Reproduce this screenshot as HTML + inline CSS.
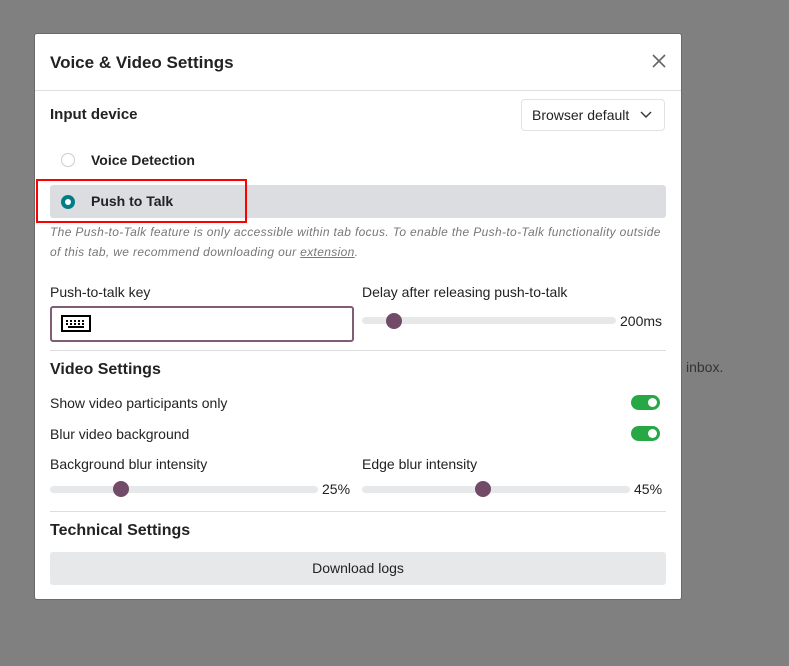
<!DOCTYPE html>
<html><head><style>
body{margin:0;width:789px;height:666px;background:#808080;font-family:"Liberation Sans",sans-serif;position:relative;overflow:hidden;color:#212529}
.a{position:absolute;white-space:nowrap}
.m{position:absolute;left:34px;top:33px;width:648px;height:567px;background:#fff;border-radius:3px;border:1px solid #6a6a6a;box-sizing:border-box}
.b{font-weight:bold;color:#222}
.t{font-size:14px;color:#222}
.track{position:absolute;height:7px;background:#e7e8ea;border-radius:4px}
.knob{position:absolute;width:16px;height:16px;border-radius:50%;background:#714b67}
.tog{position:absolute;width:29px;height:15px;border-radius:8px;background:#28a745}
.tog:after{content:"";position:absolute;right:3px;top:3px;width:9px;height:9px;border-radius:50%;background:#fff}
</style></head><body>
<div class="a" style="left:686px;top:359px;font-size:14px;color:#333">inbox.</div>
<div class="m"></div>
<div class="a b" style="left:50px;top:53px;font-size:17px">Voice &amp; Video Settings</div>
<svg class="a" style="left:651px;top:53px" width="16" height="16"><path d="M2 2L14 14M14 2L2 14" stroke="#666" stroke-width="1.6"/></svg>
<div class="a" style="left:35px;top:90px;width:646px;height:1px;background:#ddd"></div>
<div class="a b" style="left:50px;top:106px;font-size:15px">Input device</div>
<div class="a" style="left:521px;top:99px;width:144px;height:32px;border:1px solid #e2e2e2;border-radius:4px;box-sizing:border-box"></div>
<div class="a t" style="left:532px;top:107px">Browser default</div>
<svg class="a" style="left:640px;top:111px" width="12" height="8"><path d="M1 1L6 6L11 1" stroke="#333" stroke-width="1.4" fill="none"/></svg>
<div class="a" style="left:61px;top:153px;width:12px;height:12px;border-radius:50%;border:1px solid #ccc"></div>
<div class="a b" style="left:91px;top:152px;font-size:14px">Voice Detection</div>
<div class="a" style="left:50px;top:185px;width:616px;height:33px;background:#dcdde0;border-radius:3px"></div>
<div class="a" style="left:61px;top:195px;width:14px;height:14px;border-radius:50%;background:#017e84;box-sizing:border-box;border:4px solid #017e84"><div style="width:6px;height:6px;background:#fff;border-radius:50%"></div></div>
<div class="a b" style="left:91px;top:193px;font-size:14px">Push to Talk</div>
<div class="a" style="left:36px;top:179px;width:211px;height:44px;border:2px solid #f00;box-sizing:border-box"></div>
<div class="a" style="left:50px;top:222px;font-size:12px;font-style:italic;color:#777;line-height:20px;letter-spacing:0.35px">The Push-to-Talk feature is only accessible within tab focus. To enable the Push-to-Talk functionality outside<br>of this tab, we recommend downloading our <u>extension</u>.</div>
<div class="a t" style="left:50px;top:284px">Push-to-talk key</div>
<div class="a" style="left:50px;top:306px;width:304px;height:36px;border:2px solid #714b67;border-radius:3px;box-sizing:border-box;opacity:.9"></div>
<svg class="a" style="left:61px;top:315px" width="30" height="17"><rect x="1" y="1" width="28" height="15" fill="none" stroke="#000" stroke-width="2"/><g fill="#000"><rect x="5" y="5" width="2" height="2"/><rect x="9" y="5" width="2" height="2"/><rect x="13" y="5" width="2" height="2"/><rect x="17" y="5" width="2" height="2"/><rect x="21" y="5" width="2" height="2"/><rect x="5" y="8" width="2" height="2"/><rect x="9" y="8" width="2" height="2"/><rect x="13" y="8" width="2" height="2"/><rect x="17" y="8" width="2" height="2"/><rect x="21" y="8" width="2" height="2"/><rect x="7" y="11" width="16" height="2"/></g></svg>
<div class="a t" style="left:362px;top:284px">Delay after releasing push-to-talk</div>
<div class="track" style="left:362px;top:317px;width:254px"></div>
<div class="knob" style="left:386px;top:313px"></div>
<div class="a t" style="left:620px;top:313px">200ms</div>
<div class="a" style="left:50px;top:350px;width:616px;height:1px;background:#ddd"></div>
<div class="a b" style="left:50px;top:361px;font-size:16px">Video Settings</div>
<div class="a t" style="left:50px;top:395px">Show video participants only</div>
<div class="tog" style="left:631px;top:395px"></div>
<div class="a t" style="left:50px;top:426px">Blur video background</div>
<div class="tog" style="left:631px;top:426px"></div>
<div class="a t" style="left:50px;top:456px">Background blur intensity</div>
<div class="track" style="left:50px;top:486px;width:268px"></div>
<div class="knob" style="left:113px;top:481px"></div>
<div class="a t" style="left:322px;top:481px">25%</div>
<div class="a t" style="left:362px;top:456px">Edge blur intensity</div>
<div class="track" style="left:362px;top:486px;width:268px"></div>
<div class="knob" style="left:475px;top:481px"></div>
<div class="a t" style="left:634px;top:481px">45%</div>
<div class="a" style="left:50px;top:511px;width:616px;height:1px;background:#ddd"></div>
<div class="a b" style="left:50px;top:522px;font-size:16px">Technical Settings</div>
<div class="a" style="left:50px;top:552px;width:616px;height:33px;background:#e7e8ea;border-radius:3px"></div>
<div class="a t" style="left:0;width:716px;text-align:center;top:560px">Download logs</div>
</body></html>
